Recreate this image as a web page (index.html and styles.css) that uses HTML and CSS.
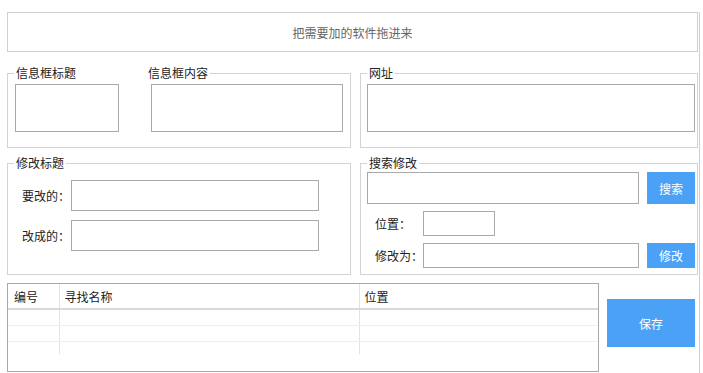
FILE: index.html
```html
<!DOCTYPE html>
<html lang="zh-CN">
<head>
    <meta charset="UTF-8">
    <title>软件信息修改</title>
    <link rel="stylesheet" href="styles.css">
</head>
<body>
    <div class="window">
        <div class="drop-zone">把需要加的软件拖进来</div>

        <div class="row row-top">
            <div class="group group-left info-group">
                <div class="legend legend-double">
                    <span>信息框标题</span>
                    <span>信息框内容</span>
                </div>
                <textarea class="box box-title"></textarea>
                <textarea class="box box-content"></textarea>
            </div>
            <div class="group group-right url-group">
                <div class="legend">网址</div>
                <textarea class="box box-url"></textarea>
            </div>
        </div>

        <div class="row row-mid">
            <div class="group group-left edit-group">
                <div class="legend">修改标题</div>
                <div class="field">
                    <label class="field-label" for="fromText">要改的：</label>
                    <input type="text" id="fromText" class="box input-wide">
                </div>
                <div class="field">
                    <label class="field-label" for="toText">改成的：</label>
                    <input type="text" id="toText" class="box input-wide">
                </div>
            </div>
            <div class="group group-right search-group">
                <div class="legend">搜索修改</div>
                <div class="search-line">
                    <input type="text" class="box input-search">
                    <button class="btn btn-search">搜索</button>
                </div>
                <div class="field small">
                    <label class="field-label short" for="pos">位置：</label>
                    <input type="text" id="pos" class="box input-pos">
                </div>
                <div class="field small">
                    <label class="field-label short" for="newVal">修改为：</label>
                    <input type="text" id="newVal" class="box input-new">
                    <button class="btn btn-edit">修改</button>
                </div>
            </div>
        </div>

        <div class="row row-bottom">
            <div class="list">
                <table>
                    <colgroup>
                        <col class="col-id">
                        <col class="col-name">
                        <col>
                    </colgroup>
                    <thead>
                        <tr><th>编号</th><th>寻找名称</th><th>位置</th></tr>
                    </thead>
                    <tbody>
                        <tr><td></td><td></td><td></td></tr>
                        <tr><td></td><td></td><td></td></tr>
                        <tr class="last"><td></td><td></td><td></td></tr>
                    </tbody>
                </table>
            </div>
            <button class="btn btn-save">保存</button>
        </div>
    </div>
</body>
</html>
```

FILE: styles.css
```css
/* WinForms-like layout */
body {
    margin: 0;
    background-color: #fff;
    font-family: "Noto Sans CJK SC", "Liberation Sans", sans-serif;
    font-size: 12px;
    color: #222;
}
.window {
    width: 691px;
    height: 373px;
    padding: 0 1px 0 7px;
    border-right: 1px solid #cfcfcf;
}
.drop-zone {
    margin-top: 12px;
    height: 38px;
    border: 1px solid #cfcfcf;
    display: flex;
    justify-content: center;
    align-items: center;
    color: #666;
    font-size: 12px;
}
.row {
    display: flex;
    gap: 9px;
}
.row-top {
    margin-top: 21px;
}
.row-mid {
    margin-top: 15px;
}
.group {
    position: relative;
    border: 1px solid #d3d3d3;
    box-sizing: border-box;
}
.group-left {
    width: 344px;
}
.group-right {
    width: 338px;
}
.legend {
    position: absolute;
    top: -8px;
    left: 6px;
    padding: 0 2px;
    background-color: #fff;
    line-height: 14px;
    color: #222;
}
.legend-double {
    display: flex;
    gap: 72px;
}
.box {
    box-sizing: border-box;
    border: 1px solid #a9a9a9;
    background-color: #fff;
    margin: 0;
    padding: 2px;
    font-family: inherit;
    font-size: 12px;
    resize: none;
    outline: none;
}
.info-group, .url-group {
    height: 75px;
    display: flex;
    padding: 10px 0 0 7px;
}
.info-group {
    gap: 32px;
}
.box-title {
    width: 104px;
    height: 48px;
}
.box-content {
    width: 192px;
    height: 48px;
}
.url-group {
    padding-left: 6px;
}
.box-url {
    width: 328px;
    height: 48px;
}
.edit-group, .search-group {
    height: 112px;
}
.edit-group {
    padding: 16px 0 0 14px;
    display: flex;
    flex-direction: column;
    gap: 9px;
}
.field {
    display: flex;
    align-items: center;
}
.field-label {
    width: 49px;
    color: #222;
}
.field-label.short {
    width: 48px;
}
.input-wide {
    width: 248px;
    height: 31px;
}
.search-group {
    padding: 8px 0 0 6px;
}
.search-line {
    display: flex;
    gap: 8px;
}
.input-search {
    width: 272px;
    height: 32px;
}
.btn {
    border: none;
    background-color: #4ba1f6;
    color: #fff;
    font-family: inherit;
    font-size: 12px;
    padding: 0;
    cursor: pointer;
}
.btn-search {
    width: 48px;
    height: 32px;
}
.field.small {
    margin-top: 7px;
    padding-left: 8px;
}
.input-pos {
    width: 72px;
    height: 25px;
}
.input-new {
    width: 216px;
    height: 25px;
    margin-right: 8px;
}
.btn-edit {
    width: 48px;
    height: 25px;
}
.row-bottom {
    margin-top: 8px;
    gap: 8px;
    align-items: flex-start;
}
.list {
    width: 592px;
    height: 89px;
    box-sizing: border-box;
    border: 1px solid #a9a9a9;
}
table {
    width: 100%;
    border-collapse: collapse;
    table-layout: fixed;
}
.col-id {
    width: 51px;
}
.col-name {
    width: 300px;
}
th {
    height: 24px;
    padding: 0 0 0 5px;
    text-align: left;
    font-weight: normal;
    color: #222;
    border-bottom: 2px solid #d9d9d9;
}
th:first-child {
    padding-left: 6px;
}
th + th, td + td {
    border-left: 1px solid #e3e3e3;
}
td {
    height: 15px;
    padding: 0;
    border-bottom: 1px solid #eeeeee;
}
tr.last td {
    height: 12px;
    border-bottom: none;
}
.btn-save {
    margin-top: 16px;
    width: 88px;
    height: 48px;
}
```
